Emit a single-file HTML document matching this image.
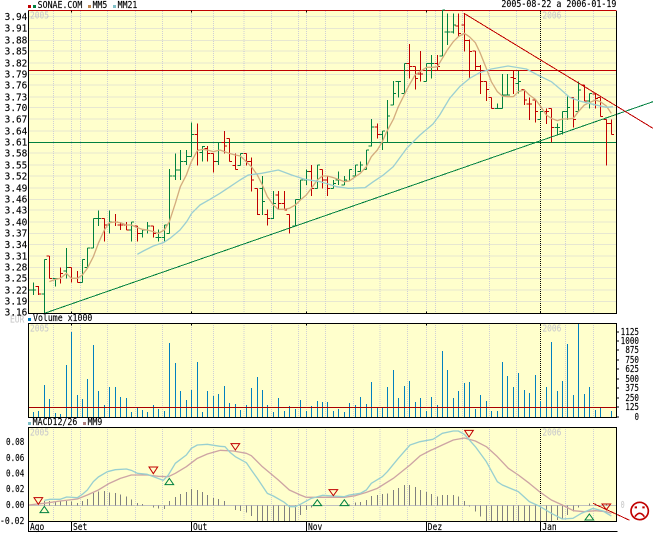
<!DOCTYPE html>
<html><head><meta charset="utf-8"><style>
html,body{margin:0;padding:0;background:#fff;width:653px;height:541px;overflow:hidden}
svg{display:block}
text{font-family:"DejaVu Sans Mono","Liberation Mono",monospace;font-size:29px;fill:#000;stroke:#000;stroke-width:.4}
.g text,text.g{fill:#ccc;stroke:#ccc}
path,line{fill:none}
</style></head><body>
<svg width="653" height="541" viewBox="0 0 1959 1623" xmlns="http://www.w3.org/2000/svg">
<rect width="1959" height="1623" fill="#fff"/>
<g fill="#ffffcc"><rect x="85" y="31" width="1764" height="909"/><rect x="85" y="971" width="1764" height="281"/><rect x="85" y="1283" width="1764" height="281"/></g>
<!-- vertical grid -->
<path shape-rendering="crispEdges" stroke="#cfcfd6" stroke-width="3" stroke-dasharray="3 3" d="M160 33V1563M214 33V1563M242 33V1563M322 33V1563M406 33V1563M488 33V1563M574 33V1563M640 33V1563M732 33V1563M814 33V1563M895 33V1563M919 33V1563M976 33V1563M1060 33V1563M1140 33V1563M1222 33V1563M1279 33V1563M1306 33V1563M1387 33V1563M1468 33V1563M1549 33V1563M1696 33V1563M1780 33V1563"/>
<path shape-rendering="crispEdges" stroke="#000" stroke-width="3" stroke-dasharray="3 3" d="M1621 33V1593"/>
<rect x="0" y="941" width="1959" height="29" fill="#fff"/><rect x="0" y="1254" width="1959" height="28" fill="#fff"/>
<!-- horizontal grid -->
<path shape-rendering="crispEdges" stroke="#cfcfd6" stroke-width="3" stroke-dasharray="3 3" d="M85 50H1848M85 85H1848M85 121H1848M85 153H1848M85 189H1848M85 223H1848M85 255H1848M85 291H1848M85 323H1848M85 357H1848M85 393H1848M85 459H1848M85 495H1848M85 528H1848M85 564H1848M85 598H1848M85 630H1848M85 666H1848M85 700H1848M85 734H1848M85 768H1848M85 802H1848M85 835H1848M85 870H1848M85 904H1848"/>
<!-- gray year labels -->
<g class="g"><text x="90" y="56" textLength="57" lengthAdjust="spacingAndGlyphs">2005</text><text x="1627" y="56" textLength="57" lengthAdjust="spacingAndGlyphs">2006</text>
<text x="90" y="995" textLength="57" lengthAdjust="spacingAndGlyphs">2005</text><text x="1627" y="995" textLength="57" lengthAdjust="spacingAndGlyphs">2006</text>
<text x="90" y="1307" textLength="57" lengthAdjust="spacingAndGlyphs">2005</text><text x="1627" y="1307" textLength="57" lengthAdjust="spacingAndGlyphs">2006</text>
<text x="30" y="968" textLength="43" lengthAdjust="spacingAndGlyphs">EUR</text><text x="1862" y="1524" textLength="12" lengthAdjust="spacingAndGlyphs">0</text></g>
<!-- horizontal levels -->
<path shape-rendering="crispEdges" stroke="#c00000" stroke-width="3" d="M85 211.5H1850M85 31.5H1850"/>
<path shape-rendering="crispEdges" stroke="#008040" stroke-width="3" d="M85 427.5H1850"/>
<!-- OHLC bars -->
<g shape-rendering="crispEdges" stroke-width="3">
<path stroke="#008040" d="M85 855V885M85 870H92M100 848V885M92 870H108M133 778V940M125 882H133M133 778H141M166 835V860M158 835H174M199 744V835M191 813H199M199 802H207M247 778V848M239 848H247M247 778H255M262 744V802M254 802H262M262 744H270M280 655V744M272 744H280M280 655H288M295 631V678M287 655H303M328 631V700M320 675H328M328 666H336M394 666V725M386 690H394M394 666H402M427 690V713M419 700H427M427 690H435M442 666V700M434 690H442M442 678H450M475 688V725M467 713H483M493 675V725M485 713H493M493 675H501M508 507V700M500 700H508M508 528H516M526 460V540M518 528H526M526 510H534M541 450V540M533 510H541M541 484H549M559 450V495M551 484H559M559 470H567M574 368V470M566 470H574M574 403H582M607 438V485M599 457H607M607 440H615M655 427V495M647 484H655M655 427H663"/>
<path stroke="#c00000" d="M115 858V885M107 860H115M115 882H123M148 768V835M140 768H148M148 835H156M181 802V850M173 835H181M181 820H189M214 802V848M206 802H214M214 835H222M232 813V848M224 835H232M232 848H240M313 655V725M305 655H313M313 675H321M346 642V678M338 666H354M361 666V690M353 675H369M379 666V690M371 675H379M379 690H387M412 678V725M404 678H412M412 700H420M460 678V713M452 678H460M460 700H468M592 370V497M584 403H592M592 450H600M622 438V485M614 445H622M622 460H630M640 460V518M632 460H640M640 484H648"/>
<g transform="translate(660 0)">
<path stroke="#008040" d="M61 460V497M53 497H61M61 460H69M127 528V645M119 565H127M127 605H135M160 573V657M152 655H160M160 610H168M226 598V678M218 678H226M226 598H234M241 540V598M233 598H241M241 540H249M259 508V555M251 540H259M259 515H267M292 495V565M284 565H292M292 495H300M340 540V565M332 565H340M340 550H348M355 515V555M347 540H363M373 528V555M365 555H373M373 540H381M388 508V543M380 543H388M388 508H396M406 495V528M398 528H406M406 495H414M421 485V515M413 515H421M421 495H429M439 450V508M431 508H439M439 450H447M454 357V440M446 438H454M454 381H462M487 393V450M479 403H487M487 393H495M502 300V427M494 427H502M502 348H510M520 243V315M512 315H520M520 280H528M535 243V293M527 244H543M553 190V282M545 280H553M553 190H561M619 190V245M611 245H619M619 190H627M634 165V236M626 190H642"/>
<path stroke="#c00000" d="M13 393V460M5 427H13M13 438H21M28 415V485M20 415H28M28 485H36M46 460V508M38 497H46M46 508H54M79 460V497M71 460H79M79 484H87M94 472V575M86 484H94M94 540H102M112 565V645M104 565H112M112 643H120M142 628V677M134 643H142M142 655H150M175 573V630M167 585H175M175 610H183M193 573V630M185 610H193M193 630H201M208 643V701M200 643H208M208 683H216M274 495V588M266 515H274M274 565H282M307 508V565M299 508H307M307 540H315M322 530V588M314 540H322M322 565H330M472 370V415M464 381H472M472 403H480M568 132V235M560 190H568M568 200H576M586 200V268M578 200H586M586 235H594M601 153V245M593 222H609M652 165V210M644 190H652M652 200H660"/>
</g>
<g transform="translate(1299 0)">
<path stroke="#008040" d="M28 30V168M20 168H28M28 30H36M43 40V135M35 96H51M61 40V100M53 96H61M61 75H69M193 310V325M185 325H201M208 222V325M200 325H208M208 285H216M223 222V285M215 285H231M256 213V280M248 250H256M256 245H264M322 335V360M314 358H322M322 335H330M373 370V403M365 382H381M388 335V403M380 395H388M388 335H396M403 290V360M395 335H403M403 322H411M436 245V335M428 335H436M436 270H444M469 280V325M461 303H469M469 280H477"/>
<path stroke="#c00000" d="M76 40V110M68 78H76M76 100H84M94 40V155M86 75H94M94 122H102M109 118V237M101 122H109M109 155H117M127 153V210M119 153H127M127 200H135M142 195V282M134 200H142M142 245H150M160 245V303M152 245H160M160 268H168M175 292V325M167 292H175M175 325H183M241 210V282M233 232H241M241 235H249M274 268V315M266 268H274M274 300H282M289 292V360M281 312H297M307 297V368M299 300H307M307 335H315M340 325V372M332 335H348M355 325V427M347 325H355M355 382H363M421 293V382M413 293H421M421 358H429M454 255V303M446 255H454M454 303H462M487 280V325M479 282H487M487 295H495M502 292V350M494 292H502M502 350H510M520 358V497M512 358H520M520 370H528M535 358V403M527 370H535M535 403H543"/>
</g>
</g>
<!-- moving averages -->
<path stroke="#d4ac7e" stroke-width="4" stroke-linejoin="round" d="M148 845L166 838L181 835L199 820L214 835L232 835L247 825L262 805L280 770L295 730L313 690L328 668L346 666L361 668L379 675L394 675L412 683L427 688L442 690L460 695L475 700L493 690L508 665L526 610L541 560L559 525L574 485L592 452L607 448L622 450L640 455L660 450L673 455L688 460L706 465L721 468L739 485L754 500L772 525L787 555L802 590L820 615L835 628L853 628L868 625L886 615L901 600L919 585L934 565L952 540L967 528L982 528L1000 533L1015 538L1033 545L1048 543L1066 530L1081 520L1099 500L1114 470L1132 450L1147 425L1160 395L1180 358L1195 320L1225 260L1245 225L1260 215L1280 202L1299 202L1312 200L1327 175L1342 150L1360 125L1375 110L1393 100L1408 110L1426 128L1441 160L1459 205L1474 245L1492 275L1507 288L1522 290L1540 290L1555 275L1573 270L1588 285L1606 298L1621 318L1639 345L1654 355L1672 362L1687 357L1702 357L1720 355L1735 335L1753 315L1768 308L1786 300L1801 305L1819 318L1834 340"/>
<path stroke="#9ccfd2" stroke-width="4" stroke-linejoin="round" d="M412 763L430 753L460 738L490 728L510 715L540 690L560 665L575 640L600 615L630 598L660 580L690 560L720 540L745 525L785 520L835 510L875 525L915 538L960 545L1010 560L1045 565L1095 563L1120 545L1150 525L1180 500L1220 445L1260 405L1299 372L1319 345L1349 295L1379 260L1409 235L1439 218L1474 207L1524 198L1579 207L1619 228L1654 245L1684 270L1709 292L1739 303L1779 313L1819 322L1839 320"/>
<!-- trend lines -->
<line shape-rendering="crispEdges" stroke="#008040" stroke-width="3" x1="133" y1="940" x2="1959" y2="305"/>
<line shape-rendering="crispEdges" stroke="#c00000" stroke-width="3" x1="1392" y1="40" x2="1959" y2="385"/>
<!-- volume bars -->
<g shape-rendering="crispEdges" stroke="#0080c0" stroke-width="3">
<g transform="translate(0 930)"><path d="M85 322V306M100 322V306M115 322V303M133 322V225M148 322V267M166 322V309M181 322V312M199 322V165M214 322V66M232 322V255M247 322V267M262 322V207M280 322V105M295 322V243M313 322V285M328 322V231M346 322V231M361 322V261M379 322V264M394 322V306M412 322V294M427 322V300M442 322V306M460 322V285M475 322V297M493 322V303M508 322V99M526 322V159M541 322V243M559 322V270M574 322V240M592 322V156M607 322V306M622 322V243M640 322V258M655 322V252"/></g>
<g transform="translate(660 930)"><path d="M13 322V228M28 322V279M46 322V282M61 322V300M79 322V285M94 322V234M112 322V201M127 322V240M142 322V285M160 322V306M175 322V264M193 322V303M208 322V288M226 322V297M241 322V270M259 322V303M274 322V288M292 322V273M307 322V276M322 322V276M340 322V303M355 322V297M373 322V306M388 322V279M406 322V285M421 322V261M439 322V282M454 322V216M472 322V291M487 322V291M502 322V231M520 322V180M535 322V264M553 322V228M568 322V213M586 322V276M601 322V264M619 322V303M634 322V261M652 322V285"/></g>
<g transform="translate(1299 930)"><path d="M28 322V123M43 322V180M61 322V264M76 322V243M94 322V219M109 322V216M127 322V297M142 322V255M160 322V273M175 322V303M193 322V303M208 322V156M223 322V198M241 322V231M256 322V189M274 322V240M289 322V249M307 322V195M322 322V273M340 322V231M355 322V96M373 322V243M388 322V213M403 322V102M421 322V255M436 322V40M454 322V252M469 322V231M487 322V300M502 322V294M535 322V303"/></g>
</g>
<path shape-rendering="crispEdges" stroke="#a80000" stroke-width="3" d="M85 1222.5H1849"/>
<!-- MACD -->
<path shape-rendering="crispEdges" stroke="#c0c0c0" stroke-width="3" d="M85 1516.5H1849"/>
<g shape-rendering="crispEdges" stroke="#808080" stroke-width="3">
<g transform="translate(0 1245)"><path d="M133 271V258M148 271V258M166 271V260M181 271V258M199 271V258M214 271V260M232 271V264M247 271V258M262 271V252M280 271V234M295 271V230M313 271V228M328 271V232M346 271V234M361 271V238M379 271V244M394 271V254M412 271V264M427 271V267M460 271V278M475 271V280M493 271V282M508 271V258M526 271V246M541 271V237M559 271V231M574 271V222M592 271V225M607 271V231M622 271V240M640 271V249M655 271V252"/></g>
<g transform="translate(660 1245)"><path d="M13 271V258M28 271V272M46 271V285M61 271V288M79 271V292M94 271V303M112 271V318M127 271V318M142 271V318M160 271V318M175 271V318M193 271V318M208 271V318M226 271V318M241 271V300M259 271V285M274 271V278M292 271V272M340 271V272M355 271V272M388 271V268M406 271V262M421 271V261M439 271V255M454 271V243M472 271V240M487 271V237M502 271V235M520 271V225M535 271V219M553 271V210M568 271V210M586 271V216M601 271V225M619 271V231M634 271V237M652 271V245"/></g>
<g transform="translate(1299 1245)"><path d="M28 271V240M43 271V240M61 271V240M76 271V245M94 271V258M109 271V274M127 271V290M142 271V305M160 271V318M175 271V318M193 271V318M208 271V318M223 271V318M241 271V318M256 271V318M274 271V318M289 271V318M307 271V318M322 271V318M340 271V318M355 271V318M373 271V315M388 271V310M403 271V300M421 271V290M436 271V278M454 271V272M469 271V265M487 271V265M520 271V268"/></g>
</g>
<g stroke-width="4" stroke-linejoin="round">
<g transform="translate(0 1245)">
<path stroke="#cda4a4" d="M85 270L133 265L181 258L232 252L262 240L295 225L328 205L361 190L394 180L442 180L475 184L505 185L526 175L559 155L592 130L622 117L660 106"/>
<path stroke="#98cfd0" d="M133 256L150 253L180 253L200 246L232 248L247 238L262 225L280 200L295 186L322 170L346 164L379 162L394 166L412 175L442 178L460 185L490 196L505 180L526 145L559 120L574 100L592 90L622 88L660 94"/>
</g>
<g transform="translate(660 1245)">
<path stroke="#cda4a4" d="M0 106L40 108L79 115L94 122L127 155L175 195L208 225L241 240L259 247L307 247L373 247L406 242L439 232L472 220L520 190L570 150L601 122L634 105L639 103"/>
<path stroke="#98cfd0" d="M0 94L15 95L30 112L46 125L79 143L94 165L112 190L142 235L160 243L193 262L208 275L226 275L241 268L274 250L307 241L340 243L373 245L388 240L421 235L439 225L454 205L487 185L502 170L535 130L570 90L600 80L639 73"/>
</g>
<g transform="translate(1299 1245)">
<path stroke="#cda4a4" d="M0 103L28 90L61 75L94 69L127 78L160 95L193 125L226 160L256 180L289 205L322 232L355 255L388 270L421 287L454 290L487 287L520 290L535 295"/>
<path stroke="#98cfd0" d="M0 73L28 55L61 48L76 48L94 58L127 95L160 140L193 200L208 210L256 230L289 260L322 275L355 295L388 312L420 310L445 295L480 280L510 288L535 303"/>
</g>
</g>
<!-- triangles -->
<g stroke-width="3" stroke-linejoin="miter">
<g transform="translate(0 1245)">
<path stroke="#c00000" d="M102 248H128L115 268ZM447 156H473L460 176Z"/>
<path stroke="#008040" d="M120 293H146L133 274ZM495 209H521L508 190Z"/>
</g>
<g transform="translate(660 1245)">
<path stroke="#c00000" d="M33 86H59L46 105ZM327 224H353L340 242Z"/>
<path stroke="#008040" d="M279 272H305L292 254ZM360 272H386L373 254Z"/>
</g>
<g transform="translate(1299 1245)">
<path stroke="#c00000" d="M95 46H121L108 66ZM507 267H533L520 284Z"/>
<path stroke="#008040" d="M456 315H482L469 297Z"/>
</g>
</g>
<line shape-rendering="crispEdges" stroke="#c00000" stroke-width="3" x1="1779" y1="1510" x2="1889" y2="1561"/>
<!-- sad face -->
<g transform="translate(1299 1245)" stroke="#c00000" fill="none">
<circle cx="620" cy="288" r="26" stroke-width="5" fill="#fff"/>
<path stroke-width="6" d="M605 277H612M628 277H635"/>
<path stroke-width="5" d="M606 305Q620 285 634 305"/>
</g>
<!-- frames -->
<path shape-rendering="crispEdges" stroke="#000" stroke-width="3" d="M85.5 31V942M1849.5 33V942M84 940.5H1851M85.5 969V1254M1849.5 969V1254M84 970.5H1851M84 1252.5H1851M85.5 1281V1596M1849.5 1281V1566M84 1282.5H1851M84 1564.5H1851M84 1594.5H1852"/>
<path shape-rendering="crispEdges" stroke="#000" stroke-width="3" d="M214 31V37M574 31V37M919 31V37M1279 31V37M1621 31V37M214 934V940M574 934V940M919 934V940M1279 934V940M1621 934V940M214 970V976M574 970V976M919 970V976M1279 970V976M1621 970V976M214 1564V1594M574 1564V1594M919 1564V1594M1279 1564V1594M1621 1564V1594"/>
<path shape-rendering="crispEdges" stroke="#000" stroke-width="3" d="M1851 996H1857M1851 1023H1857M1851 1050H1857M1851 1080H1857M1851 1107H1857M1851 1137H1857M1851 1164H1857M1851 1194H1857M1851 1221H1857M1851 1251H1857"/>
<!-- legend squares -->
<g shape-rendering="crispEdges">
<rect x="84" y="15" width="9" height="9" fill="#c00000"/><rect x="99" y="15" width="9" height="9" fill="#008040"/>
<rect x="264" y="15" width="9" height="9" fill="#c08850"/><rect x="339" y="15" width="9" height="9" fill="#80c0c8"/>
<rect x="84" y="954" width="9" height="9" fill="#0080c0"/>
<rect x="84" y="1266" width="9" height="9" fill="#80c0c8"/><rect x="249" y="1266" width="9" height="9" fill="#b08080"/>
</g>
<!-- legends -->
<text x="113" y="24" textLength="134" lengthAdjust="spacingAndGlyphs">SONAE.COM</text>
<text x="278" y="24" textLength="44" lengthAdjust="spacingAndGlyphs">MM5</text>
<text x="353" y="24" textLength="59" lengthAdjust="spacingAndGlyphs">MM21</text>
<text x="1504" y="21" textLength="345" lengthAdjust="spacingAndGlyphs">2005-08-22 a 2006-01-19</text>
<text x="99" y="963" textLength="178" lengthAdjust="spacingAndGlyphs">Volume x1000</text>
<text x="98" y="1275" textLength="134" lengthAdjust="spacingAndGlyphs">MACD12/26</text>
<text x="263" y="1275" textLength="44" lengthAdjust="spacingAndGlyphs">MM9</text>
<!-- price axis -->
<g>
<text x="14" y="60" textLength="68" lengthAdjust="spacingAndGlyphs">3.94</text>
<text x="14" y="95" textLength="68" lengthAdjust="spacingAndGlyphs">3.91</text>
<text x="14" y="131" textLength="68" lengthAdjust="spacingAndGlyphs">3.88</text>
<text x="14" y="163" textLength="68" lengthAdjust="spacingAndGlyphs">3.85</text>
<text x="14" y="199" textLength="68" lengthAdjust="spacingAndGlyphs">3.82</text>
<text x="14" y="233" textLength="68" lengthAdjust="spacingAndGlyphs">3.79</text>
<text x="14" y="265" textLength="68" lengthAdjust="spacingAndGlyphs">3.76</text>
<text x="14" y="301" textLength="68" lengthAdjust="spacingAndGlyphs">3.73</text>
<text x="14" y="333" textLength="68" lengthAdjust="spacingAndGlyphs">3.70</text>
<text x="14" y="367" textLength="68" lengthAdjust="spacingAndGlyphs">3.67</text>
<text x="14" y="403" textLength="68" lengthAdjust="spacingAndGlyphs">3.64</text>
<text x="14" y="437" textLength="68" lengthAdjust="spacingAndGlyphs">3.61</text>
<text x="14" y="469" textLength="68" lengthAdjust="spacingAndGlyphs">3.58</text>
<text x="14" y="505" textLength="68" lengthAdjust="spacingAndGlyphs">3.55</text>
<text x="14" y="538" textLength="68" lengthAdjust="spacingAndGlyphs">3.52</text>
<text x="14" y="574" textLength="68" lengthAdjust="spacingAndGlyphs">3.49</text>
<text x="14" y="608" textLength="68" lengthAdjust="spacingAndGlyphs">3.46</text>
<text x="14" y="640" textLength="68" lengthAdjust="spacingAndGlyphs">3.43</text>
<text x="14" y="676" textLength="68" lengthAdjust="spacingAndGlyphs">3.40</text>
<text x="14" y="710" textLength="68" lengthAdjust="spacingAndGlyphs">3.37</text>
<text x="14" y="744" textLength="68" lengthAdjust="spacingAndGlyphs">3.34</text>
<text x="14" y="778" textLength="68" lengthAdjust="spacingAndGlyphs">3.31</text>
<text x="14" y="812" textLength="68" lengthAdjust="spacingAndGlyphs">3.28</text>
<text x="14" y="845" textLength="68" lengthAdjust="spacingAndGlyphs">3.25</text>
<text x="14" y="880" textLength="68" lengthAdjust="spacingAndGlyphs">3.22</text>
<text x="14" y="914" textLength="68" lengthAdjust="spacingAndGlyphs">3.19</text>
<text x="14" y="947" textLength="68" lengthAdjust="spacingAndGlyphs">3.16</text>
</g>
<!-- volume axis -->
<g>
<text x="1862" y="1005" textLength="55" lengthAdjust="spacingAndGlyphs">1125</text>
<text x="1862" y="1032" textLength="55" lengthAdjust="spacingAndGlyphs">1000</text>
<text x="1876" y="1059" textLength="41" lengthAdjust="spacingAndGlyphs">875</text>
<text x="1876" y="1089" textLength="41" lengthAdjust="spacingAndGlyphs">750</text>
<text x="1876" y="1116" textLength="41" lengthAdjust="spacingAndGlyphs">625</text>
<text x="1876" y="1146" textLength="41" lengthAdjust="spacingAndGlyphs">500</text>
<text x="1876" y="1173" textLength="41" lengthAdjust="spacingAndGlyphs">375</text>
<text x="1876" y="1203" textLength="41" lengthAdjust="spacingAndGlyphs">250</text>
<text x="1876" y="1230" textLength="41" lengthAdjust="spacingAndGlyphs">125</text>
<text x="1904" y="1260" textLength="13" lengthAdjust="spacingAndGlyphs">0</text>
</g>
<!-- MACD axis -->
<g>
<text x="18" y="1335" textLength="55" lengthAdjust="spacingAndGlyphs">0.08</text>
<text x="18" y="1383" textLength="55" lengthAdjust="spacingAndGlyphs">0.06</text>
<text x="18" y="1429" textLength="55" lengthAdjust="spacingAndGlyphs">0.04</text>
<text x="18" y="1476" textLength="55" lengthAdjust="spacingAndGlyphs">0.02</text>
<text x="18" y="1524" textLength="55" lengthAdjust="spacingAndGlyphs">0.00</text>
<text x="0" y="1572" textLength="73" lengthAdjust="spacingAndGlyphs">-0.02</text>
</g>
<!-- months -->
<text x="90" y="1590" textLength="43" lengthAdjust="spacingAndGlyphs">Ago</text>
<text x="219" y="1590" textLength="43" lengthAdjust="spacingAndGlyphs">Set</text>
<text x="579" y="1590" textLength="43" lengthAdjust="spacingAndGlyphs">Out</text>
<text x="924" y="1590" textLength="43" lengthAdjust="spacingAndGlyphs">Nov</text>
<text x="1283" y="1590" textLength="44" lengthAdjust="spacingAndGlyphs">Dez</text>
<text x="1627" y="1590" textLength="43" lengthAdjust="spacingAndGlyphs">Jan</text>
</svg>
</body></html>
